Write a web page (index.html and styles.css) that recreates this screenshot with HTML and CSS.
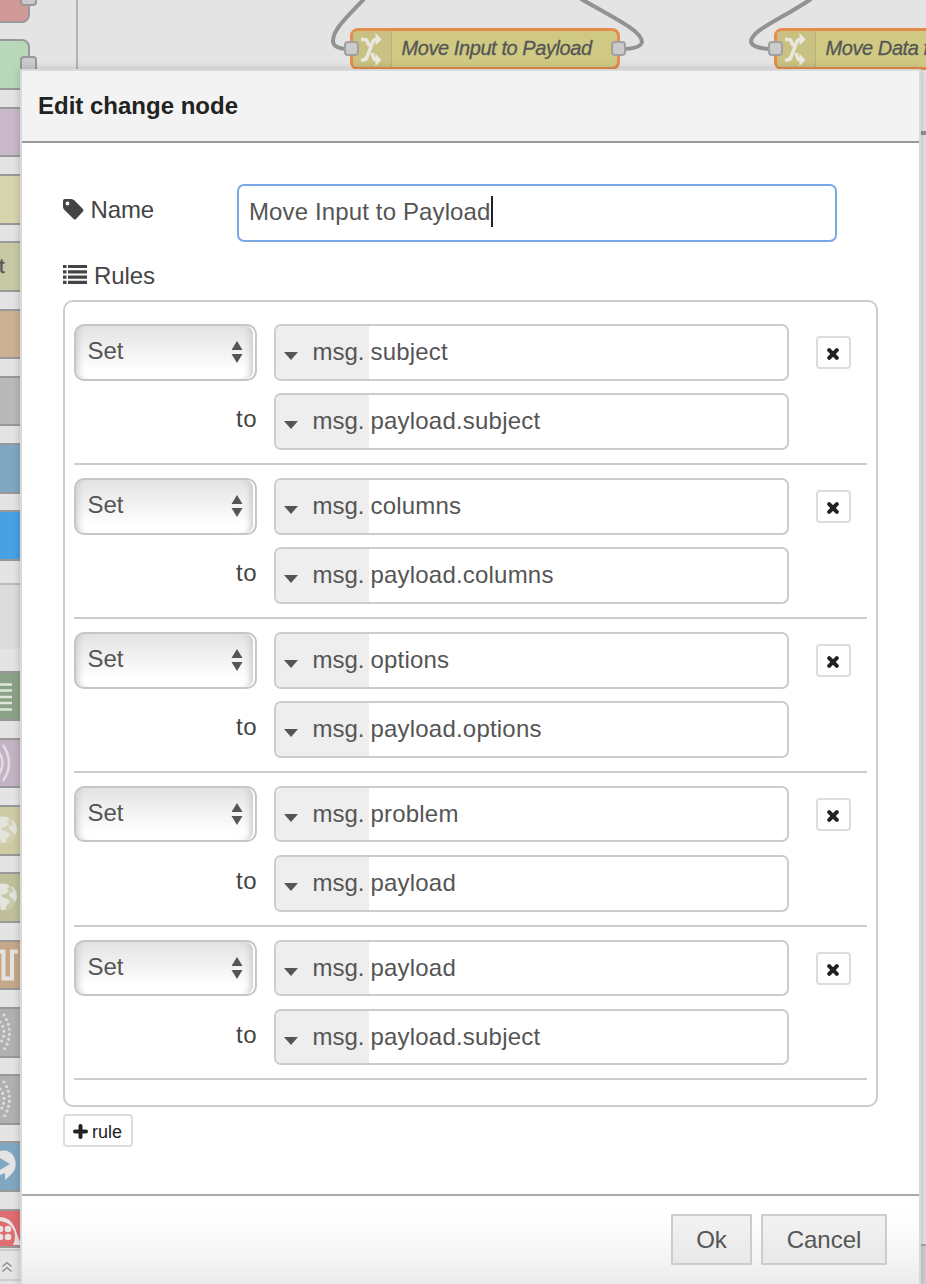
FILE: index.html
```html
<!DOCTYPE html>
<html lang="en">
<head>
<meta charset="utf-8">
<title>Edit change node</title>
<link rel="stylesheet" href="styles.css">
</head>
<body>
<svg class="defs" width="0" height="0">
  <symbol id="shuffle" viewBox="0 0 22 34">
    <path d="M1 27H3Q6 27 7.500 23L12 10.500Q13.500 6.500 16 6.500M1 6.500H4.500Q7 6.500 8 10L9 13M12 20L13.500 24.500Q14.500 27 17 27" fill="none" stroke="#e8e8e0" stroke-width="3.600"/>
    <path d="M15.500 0L21.500 6.500L15.500 12.500ZM15.500 20.500L21.500 27L15.500 33Z" fill="#e8e8e0"/>
  </symbol>
  <symbol id="globe" viewBox="0 0 34 30">
    <circle cx="20" cy="15" r="13" fill="#e4e4df" opacity=".25"/>
    <path d="M9 6Q14 0 23 2L26 5L23 6L25 9L21 12L17 13L18 15L24 17L26 20L23 23L21 28L17 28L16 22L12 17L9 14ZM27 4L30 6Q33 10 33 15L31 20L29 17L27 16L25 13L26 10L29 11L29 8Z" fill="#e4e4df"/>
  </symbol>
  <symbol id="dots" viewBox="0 0 20 40">
    <g fill="none" stroke="#dcdcdc" stroke-width="3.200" stroke-linecap="round" stroke-dasharray="0 5.100">
      <path d="M4 3Q15 20 4 38"/><path d="M0 10Q8 20 0 32"/>
    </g>
  </symbol>
  <symbol id="times" viewBox="0 0 12 12"><path d="M2.200 2.200L9.800 9.800M9.800 2.200L2.200 9.800" stroke="#222" stroke-width="4" stroke-linecap="round"/></symbol>
  <symbol id="updown" viewBox="0 0 12 22"><path d="M6 0L11.500 9H.5ZM6 22L.5 13H11.500Z" fill="#555"/></symbol>
</svg>
<main class="app">
  <aside class="palette">
    <div class="nodes first">
      <div class="pnode red"><i class="port"></i></div>
      <div class="pnode green"><i class="port"></i></div>
      <div class="pnode purple"></div>
      <div class="pnode yellow"></div>
      <div class="pnode olive"><span>t</span></div>
      <div class="pnode orange"></div>
      <div class="pnode gray"></div>
      <div class="pnode blue"></div>
      <div class="pnode bright"></div>
    </div>
    <div class="category"></div>
    <div class="nodes second">
      <div class="pnode darkgreen"><svg width="20" height="46"><path d="M0 11.500H12M0 17.500H12M0 24H12M0 30H12M0 36.500H12" stroke="#dfe6dc" stroke-width="2.500"/></svg></div>
      <div class="pnode mauve"><svg width="20" height="46" fill="none" stroke="#e2dce2" stroke-width="2.500"><path d="M3 5Q15 23 3 41M-2 11Q7 23 -2 36"/></svg></div>
      <div class="pnode yellow2"><svg class="globe"><use href="#globe"/></svg></div>
      <div class="pnode olive2"><svg class="globe"><use href="#globe"/></svg></div>
      <div class="pnode orange2"><svg width="20" height="46"><path d="M0 9.500H3.500V36.500H12V9.500H18" fill="none" stroke="#e6e2de" stroke-width="4"/></svg></div>
      <div class="pnode gray2"><svg class="dots"><use href="#dots"/></svg></div>
      <div class="pnode gray2"><svg class="dots"><use href="#dots"/></svg></div>
      <div class="pnode blue"><svg width="20" height="46"><path d="M0 8Q8 6 13 12Q18 20 14 28Q11 32 5 37V30L0 32V27L10 21L0 15Z" fill="#e4e4e4"/></svg></div>
      <div class="pnode crimson"><svg width="20" height="34"><path d="M0 6Q10 6 15 17Q17 23 20 31V34H13Q18 24 11 15Q7 11 0 10Z" fill="#e8e4e4"/><g fill="#e8e4e4"><circle cx="0" cy="18" r="3.300"/><circle cx="8" cy="18" r="3.300"/><circle cx="0" cy="26" r="3.300"/><circle cx="8" cy="26" r="3.300"/></g></svg></div>
    </div>
    <div class="palette-foot"><svg width="12" height="12"><path d="M1.500 5.500L6 1.500L10.500 5.500M1.500 10.500L6 6.500L10.500 10.500" fill="none" stroke="#888" stroke-width="1.300"/></svg></div>
  </aside>
  <section class="workspace">
    <svg class="wires" width="926" height="140" fill="none" stroke="#929292" stroke-width="4">
      <path d="M364 -1C344 20 333 30 333 41C333 47 341 49 350 49"/>
      <path d="M581 -1C622 22 642 32 642 42C641 48 630 49 620 49"/>
      <path d="M811 -1C780 20 751 30 751 42C753 48 764 49 774 49"/>
      <path d="M916 133H926"/>
    </svg>
    <div class="fnode one"><span class="ficon"><svg><use href="#shuffle"/></svg></span><span class="flabel">Move Input to Payload</span><i class="fport in"></i><i class="fport out"></i></div>
    <div class="fnode two"><span class="ficon"><svg><use href="#shuffle"/></svg></span><span class="flabel">Move Data f</span><i class="fport in"></i></div>
    <div class="statusbar"></div>
  </section>
  <section class="dialog">
    <header class="title"><span>Edit change node</span></header>
    <div class="form">
      <div class="name-row">
        <label class="label"><svg width="21" height="21"><path fill-rule="evenodd" d="M2 0H8.500Q10 .2 11.500 1.500L20 10Q21 11.500 20 12.500L13 20Q12 21 10.700 20L1.500 11Q0 9.500 0 8V2Q0 0 2 0ZM4.500 2.600A1.900 1.900 0 1 0 4.500 6.400A1.900 1.900 0 1 0 4.500 2.600Z" fill="#444"/></svg><span class="t-name">Name</span></label>
        <div class="name-input"><span>Move Input to Payload</span><i class="caret"></i></div>
      </div>
      <label class="label rules-label"><svg width="24" height="19"><path d="M0 1.500H3.500M5 1.500H24M0 6.800H3.500M5 6.800H24M0 12.100H3.500M5 12.100H24M0 17.400H3.500M5 17.400H24" stroke="#444" stroke-width="3.200"/></svg><span class="t-rules">Rules</span></label>
      <div class="rules">
        <div class="rule">
          <div class="select"><span>Set</span><svg><use href="#updown"/></svg></div>
          <div class="typed"><span class="type"><i></i><b>msg.</b></span><span class="value">subject</span></div>
          <button class="remove"><svg><use href="#times"/></svg></button>
          <span class="to">to</span>
          <div class="typed"><span class="type"><i></i><b>msg.</b></span><span class="value">payload.subject</span></div>
        </div>
        <div class="rule">
          <div class="select"><span>Set</span><svg><use href="#updown"/></svg></div>
          <div class="typed"><span class="type"><i></i><b>msg.</b></span><span class="value">columns</span></div>
          <button class="remove"><svg><use href="#times"/></svg></button>
          <span class="to">to</span>
          <div class="typed"><span class="type"><i></i><b>msg.</b></span><span class="value">payload.columns</span></div>
        </div>
        <div class="rule">
          <div class="select"><span>Set</span><svg><use href="#updown"/></svg></div>
          <div class="typed"><span class="type"><i></i><b>msg.</b></span><span class="value">options</span></div>
          <button class="remove"><svg><use href="#times"/></svg></button>
          <span class="to">to</span>
          <div class="typed"><span class="type"><i></i><b>msg.</b></span><span class="value">payload.options</span></div>
        </div>
        <div class="rule">
          <div class="select"><span>Set</span><svg><use href="#updown"/></svg></div>
          <div class="typed"><span class="type"><i></i><b>msg.</b></span><span class="value">problem</span></div>
          <button class="remove"><svg><use href="#times"/></svg></button>
          <span class="to">to</span>
          <div class="typed"><span class="type"><i></i><b>msg.</b></span><span class="value">payload</span></div>
        </div>
        <div class="rule">
          <div class="select"><span>Set</span><svg><use href="#updown"/></svg></div>
          <div class="typed"><span class="type"><i></i><b>msg.</b></span><span class="value">payload</span></div>
          <button class="remove"><svg><use href="#times"/></svg></button>
          <span class="to">to</span>
          <div class="typed"><span class="type"><i></i><b>msg.</b></span><span class="value">payload.subject</span></div>
        </div>
      </div>
      <button class="add"><svg width="15" height="15"><path d="M7.500 2V13M2 7.500H13" stroke="#222" stroke-width="4" stroke-linecap="round"/></svg><span>rule</span></button>
    </div>
    <footer class="actions"><button class="btn ok">Ok</button><button class="btn cancel">Cancel</button></footer>
  </section>
</main>
</body>
</html>
```
FILE: styles.css
```css
* { box-sizing: border-box; }
body { margin: 0; font-family: "Liberation Sans", Arial, sans-serif; font-size: 24px; color: #444; }
svg { display: block; flex: none; }
.defs { position: absolute; }
button { font-family: inherit; padding: 0; margin: 0; }
.app { position: relative; width: 926px; height: 1284px; overflow: hidden; background: #e4e4e4; }

.palette { width: 78px; height: 1284px; border-right: 2px solid #b3b3b3; display: flex; flex-direction: column; overflow: hidden; }
.nodes { display: flex; flex-direction: column; gap: 16.7px; flex: none; }
.first { margin-top: -27.9px; height: 611px; }
.second { height: 599px; padding-top: 21.4px; overflow: hidden; }
.pnode { position: relative; width: 50px; height: 50.6px; flex: none; margin-left: -20px; padding-left: 18px; border: 2px solid #999; border-radius: 8px; }
.second .pnode:last-child { height: 39px; border-radius: 0; }
.pnode span { display: block; font-size: 20px; line-height: 46px; margin-left: -1px; color: #555; -webkit-text-stroke: .4px #555; }
.port { position: absolute; right: -9px; top: 14.600px; width: 17px; height: 17px; border: 2px solid #999; border-radius: 4px; background: #cbcbcb; }
.red { background: #d29999; } .green { background: #b9d8b9; } .purple { background: #c9b9c9; }
.yellow { background: #d7d5ad; } .olive { background: #c8c9a4; } .orange { background: #ceb193; }
.gray { background: #b9b9b9; } .blue { background: #80a7c2; } .bright { background: #46a2e4; }
.darkgreen { background: #8ca286; } .mauve { background: #c3b2c3; } .yellow2 { background: #cccba3; }
.olive2 { background: #bfc09a; } .orange2 { background: #c5a889; } .gray2 { background: #b0b0b0; } .crimson { background: #de6c70; }
.globe { width: 34px; height: 30px; margin: 8px 0 0 -16px; }
.dots { width: 20px; height: 40px; margin-top: 3px; }
.category { height: 66px; flex: none; background: #dcdcdc; border-top: 2px solid #bbb; }
.palette-foot { height: 32px; flex: none; margin-top: 1px; border-top: 2px solid #ccc; border-bottom: 2px solid #ccc; padding: 10px 0 0 1px; }

.wires { position: absolute; left: 0; top: 0; }
.fnode { position: absolute; top: 28px; height: 42px; display: flex; align-items: stretch; background: #d0c983; border: 3px solid #e58b4b; border-radius: 8px; }
.one { left: 350px; width: 270px; }
.two { left: 774px; width: 270px; }
.ficon { width: 39px; padding: 2px 0 0 7px; background: #c8c182; border-right: 1px solid #b8b277; border-radius: 4px 0 0 4px; }
.ficon svg { width: 22px; height: 34px; }
.flabel { font-size: 20px; font-style: italic; line-height: 35px; padding-left: 9.500px; color: #555; white-space: nowrap; letter-spacing: -.42px; -webkit-text-stroke: .3px #555; }
.fport { position: absolute; top: 10px; width: 15px; height: 15px; background: #cbcbcb; border: 2px solid #a0a0a0; border-radius: 4px; }
.fport.in { left: -9px; } .fport.out { right: -9px; }
.statusbar { position: absolute; left: 78px; right: 0; top: 1244px; bottom: 0; background: #d0d0d0; border-top: 2px solid #aaa; }

.dialog { position: absolute; left: 20px; top: 69px; width: 901px; height: 1217px; border: 2px solid #d9d9d9; background: #fff; box-shadow: 0 0 8px rgba(0,0,0,.2); display: flex; flex-direction: column; }
.title { height: 72px; flex: none; background: #f3f3f3; border-bottom: 2px solid #999; padding-left: 16px; font-weight: bold; line-height: 70px; color: #222; }
.form { height: 1051px; flex: none; padding: 41px 41px 0; }
.name-row { display: flex; height: 58px; }
.label { display: flex; align-items: center; letter-spacing: -.1px; }
.name-row .label { width: 174px; height: 51px; gap: 6.500px; }
.name-input { width: 600px; border: 2px solid #79a9e5; border-radius: 7px; display: flex; align-items: center; padding: 0 0 3px 10px; color: #555; letter-spacing: .13px; }
.caret { width: 2px; height: 31px; background: #222; }
.rules-label { height: 34px; gap: 7px; margin-top: 17px; }
.rules-label svg { margin-top: -3px; }
.rules { width: 815px; height: 807px; margin-top: 7px; border: 2px solid #ccc; border-radius: 10px; padding: 9px 9px 0; }
.rule { height: 153.900px; padding-top: 13.200px; border-bottom: 2px solid #ccc; display: grid; grid-template-columns: 183px 515px 35px; column-gap: 17px; grid-template-rows: 56.600px 56.600px; row-gap: 12.500px; }
.select { border: 2px solid #c6c6c6; border-radius: 10px; background: linear-gradient(#e3e3e3, #fff 85%); box-shadow: inset -2px 0 0 #fff, inset 8px 0 7px -6px #ccc, inset -10px 0 7px -6px #c4c4c4; display: flex; align-items: center; justify-content: space-between; padding: 0 12px 2.600px 11.500px; color: #555; }
.select svg { width: 12px; height: 22px; margin-top: 2px; }
.typed { border: 2px solid #ccc; border-radius: 7px; overflow: hidden; display: flex; color: #555; line-height: 52px; }
.type { width: 93px; background: #eee; display: flex; align-items: center; padding-left: 7.500px; }
.type i { border: 7px solid transparent; border-top: 8px solid #555; border-bottom: 0; margin-top: 7px; }
.type b { font-weight: normal; margin-left: 15px; margin-top: -.5px; }
.value { padding-left: 1.500px; letter-spacing: .2px; }
.to { text-align: right; line-height: 51px; letter-spacing: .5px; }
.remove { width: 35px; height: 33px; margin: 12px 0 0 9.500px; background: #fff; border: 2px solid #ddd; border-radius: 4px; display: flex; align-items: center; justify-content: center; }
.remove svg { width: 12px; height: 12px; margin: 3px 1px 0 0; }
.add { width: 70px; height: 33px; margin-top: 7px; background: #fff; border: 2px solid #ddd; border-radius: 4px; display: flex; align-items: center; padding: 0 0 0 8px; gap: 4px; color: #222; font-size: 18px; }
.add svg { margin-top: 2px; }
.add span { padding-top: 3px; }
.actions { flex: 1; border-top: 2px solid #aaa; background: linear-gradient(#fff, #fefefe 30%, #f5f5f5 70%, #ebebeb); display: flex; justify-content: flex-end; gap: 9px; padding: 18px 32px 0 0; }
.btn { height: 51px; font-size: 24px; color: #555; background: linear-gradient(#f2f2f2, #e8e8e8); border: 2px solid #ccc; border-radius: 1px; }
.ok { width: 81px; } .cancel { width: 126px; }
```
